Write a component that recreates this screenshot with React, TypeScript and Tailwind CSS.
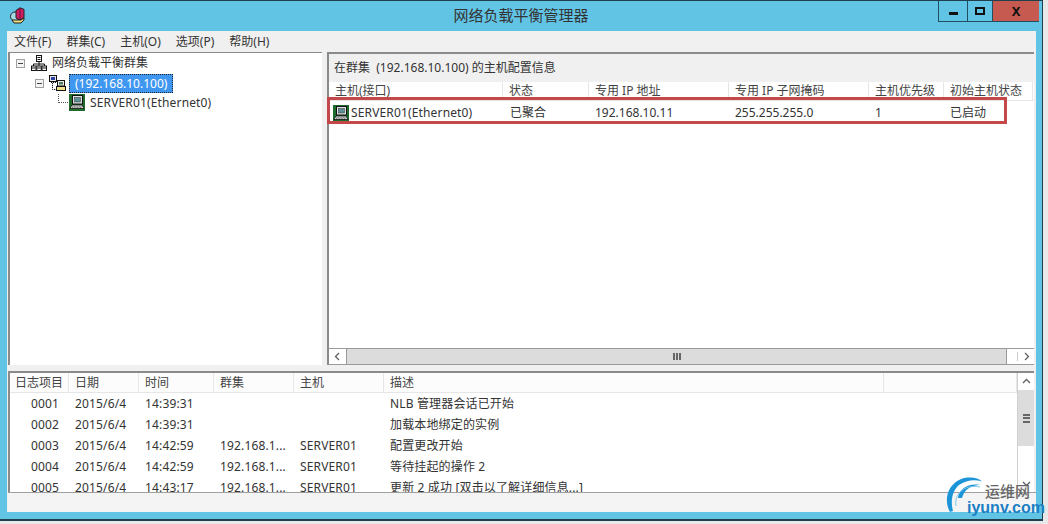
import React from "react";

const font = { fontFamily: '"Noto Sans","Noto Sans CJK SC",sans-serif' };

function ServerIcon() {
  return (
    <svg width="16" height="17" viewBox="0 0 16 17" className="shrink-0">
      <rect x="0" y="0" width="16" height="17" fill="#1f6b2c" />
      <rect x="3.5" y="1.5" width="10" height="8.5" fill="#e0e3e4" stroke="#111" />
      <rect x="5.5" y="3.5" width="6" height="4.5" fill="#5d8f94" stroke="#333" strokeWidth="0.5" />
      <path d="M3 11h10l2 3.5H1z" fill="#e6e6e6" stroke="#111" strokeWidth="0.8" />
      <path d="M3.5 12.4h9M3 13.6h10" stroke="#444" strokeWidth="0.7" strokeDasharray="1 0.6" />
    </svg>
  );
}

function NetIcon() {
  return (
    <svg width="16" height="16" viewBox="0 0 16 16" className="shrink-0">
      <rect x="5.5" y="0.5" width="5" height="6" fill="#fff" stroke="#111" />
      <path d="M6.5 2.5h3M6.5 4.5h3" stroke="#111" />
      <path d="M8 7v2M2.5 11V9h11v2M8 9v2" stroke="#111" fill="none" />
      <rect x="0.5" y="11" width="4.5" height="4.5" fill="#fff" stroke="#111" />
      <rect x="5.8" y="11" width="4.5" height="4.5" fill="#fff" stroke="#111" />
      <rect x="11" y="11" width="4.5" height="4.5" fill="#fff" stroke="#111" />
      <path d="M1 13h3.5M6.3 13h3.5M11.5 13H15" stroke="#111" />
    </svg>
  );
}

function ClusterIcon() {
  return (
    <svg width="17" height="17" viewBox="0 0 17 17" className="shrink-0">
      <rect x="0.5" y="0.5" width="7" height="6" fill="#e8e8e8" stroke="#111" />
      <rect x="2" y="2" width="4" height="3" fill="#2a3f9e" />
      <path d="M2 7.5h5M3.5 8v6.5H7" stroke="#111" fill="none" strokeDasharray="1.2 0.8" />
      <rect x="8.5" y="5.5" width="7" height="5.5" fill="#e8e8e8" stroke="#111" />
      <rect x="10" y="7" width="4" height="2.5" fill="#4d7f5c" />
      <rect x="7.5" y="11.5" width="9" height="4" fill="#eee08a" stroke="#111" />
    </svg>
  );
}

function AppIcon() {
  return (
    <svg width="17" height="17" viewBox="0 0 17 17">
      <circle cx="5" cy="9.5" r="4.5" fill="#a5dce8" stroke="#222" />
      <path d="M6 3.5 10 0.8l4 1.6v8.4L10 13 6 11z" fill="#cc1f63" stroke="#222" />
      <path d="M10 1v12" stroke="#6b1038" />
      <path d="M2 13h9l3-2v2l-3 3H4z" fill="#f2dd7c" stroke="#222" />
    </svg>
  );
}

const Expander = () => (
  <span className="flex h-[9px] w-[9px] shrink-0 items-center justify-center border border-[#a0a0a0] bg-[#f4f4f4]">
    <span className="h-px w-[5px] bg-[#444]" />
  </span>
);

const hostCols: [string, number][] = [
  ["主机(接口)", 174],
  ["状态", 86],
  ["专用 IP 地址", 140],
  ["专用 IP 子网掩码", 140],
  ["主机优先级", 75],
  ["初始主机状态", 89],
];

const logCols: [string, number][] = [
  ["日志项目", 59],
  ["日期", 70],
  ["时间", 75],
  ["群集", 80],
  ["主机", 90],
  ["描述", 500],
  ["", 133],
];

const logRows = [
  ["0001", "2015/6/4", "14:39:31", "", "", "NLB 管理器会话已开始"],
  ["0002", "2015/6/4", "14:39:31", "", "", "加载本地绑定的实例"],
  ["0003", "2015/6/4", "14:42:59", "192.168.1...", "SERVER01", "配置更改开始"],
  ["0004", "2015/6/4", "14:42:59", "192.168.1...", "SERVER01", "等待挂起的操作 2"],
  ["0005", "2015/6/4", "14:43:17", "192.168.1...", "SERVER01", "更新 2 成功 [双击以了解详细信息...]"],
];

const Chevron = ({ d }: { d: string }) => (
  <svg width="9" height="9" viewBox="0 0 9 9">
    <path d={d} fill="none" stroke="#606060" strokeWidth="1.3" />
  </svg>
);

export default function App() {
  return (
    <div className="relative h-[524px] w-[1048px] overflow-hidden bg-[#e8e8e8] text-[12px] text-[#333]" style={font}>
      <div className="flex h-[521px] w-[1043px] flex-col border-b-2 border-r border-t border-[#1f3f4d] bg-[#62c4e5]">
        {/* Title bar */}
        <div className="grid h-[30px] shrink-0 grid-cols-[1fr_auto_1fr] items-start">
          <div className="pl-[10px] pt-[6px]">
            <AppIcon />
          </div>
          <div className="pt-[4px] text-[15px] leading-[20px] text-[#333]">网络负载平衡管理器</div>
          <div className="flex justify-end pr-[3px]">
            <div className="flex h-[21px] w-[29px] items-center justify-center border-b border-l border-[#1f4f60]">
              <span className="mt-[4px] h-[3px] w-[9px] bg-[#111]" />
            </div>
            <div className="flex h-[21px] w-[25px] items-center justify-center border-b border-l border-[#1f4f60]">
              <span className="h-[8px] w-[10px] border-2 border-[#111]" />
            </div>
            <div className="flex h-[21px] w-[47px] items-center justify-center border-b border-l border-[#1f4f60] bg-[#c75a50] text-[13px] font-bold leading-none text-[#111]">
              X
            </div>
          </div>
        </div>

        {/* Client */}
        <div className="ml-[7px] mr-[6px] flex h-[481px] flex-col bg-[#f0f0f0]">
          <div className="flex h-[21px] shrink-0 items-center gap-[15px] pl-[7px] leading-[20px]">
            <span>文件(F)</span>
            <span>群集(C)</span>
            <span>主机(O)</span>
            <span>选项(P)</span>
            <span>帮助(H)</span>
          </div>

          <div className="flex h-[313px] shrink-0">
            {/* Tree */}
            <div className="ml-px h-full w-[314px] border-t border-l-2 border-[#8a8a8a] bg-white pl-[6px]">
              <div className="flex h-[20px] items-center">
                <Expander />
                <span className="ml-[6px]"><NetIcon /></span>
                <span className="ml-[5px]">网络负载平衡群集</span>
              </div>
              <div className="flex h-[21px] items-center pl-[19px]">
                <Expander />
                <span className="ml-[5px]"><ClusterIcon /></span>
                <span className="ml-[3px] border border-dotted border-[#223] bg-[#3f97f0] px-[5px] leading-[17px] text-white">(192.168.10.100)</span>
              </div>
              <div className="flex h-[17px] items-center pl-[42px]">
                <span className="relative mr-px h-px w-[10px] border-t border-dotted border-[#555]">
                  <span className="absolute bottom-0 left-0 h-[9px] w-px border-l border-dotted border-[#555]" />
                </span>
                <ServerIcon />
                <span className="ml-[5px] tracking-[0.15px]">SERVER01(Ethernet0)</span>
              </div>
            </div>

            {/* Right pane */}
            <div className="ml-[5px] mr-[2px] flex h-full min-w-0 flex-1 flex-col border-t-2 border-l-2 border-[#8a8a8a] bg-white">
              <div className="flex h-[28px] shrink-0 items-center whitespace-pre bg-[#f0f0f0] pb-px pl-[5px]">在群集  (192.168.10.100) 的主机配置信息</div>
              <div className="flex h-[19px] shrink-0 border-b border-[#e6e6e6]">
                {hostCols.map(([t, w]) => (
                  <div key={t} className="shrink-0 overflow-hidden border-r border-[#e6e6e6] pl-[6px] leading-[18px] text-[#444]" style={{ width: w }}>
                    {t}
                  </div>
                ))}
              </div>
              <div className="flex h-[24px] shrink-0 items-center">
                <div className="flex w-[175px] shrink-0 items-center pl-[4px]">
                  <ServerIcon />
                  <span className="ml-[2px] tracking-[0.15px]">SERVER01(Ethernet0)</span>
                </div>
                <div className="w-[85px] shrink-0 pl-[6px]">已聚合</div>
                <div className="w-[140px] shrink-0 pl-[6px]">192.168.10.11</div>
                <div className="w-[140px] shrink-0 pl-[6px]">255.255.255.0</div>
                <div className="w-[75px] shrink-0 pl-[6px]">1</div>
                <div className="w-[85px] shrink-0 pl-[6px]">已启动</div>
              </div>
              <div className="flex-1" />
              <div className="flex h-[17px] shrink-0 items-center border-y border-[#9a9a9a] bg-white">
                <div className="flex w-[17px] shrink-0 items-center justify-center"><Chevron d="M6 1 2.5 4.5 6 8" /></div>
                <div className="flex h-full w-[661px] shrink-0 items-center justify-center border-x border-[#9a9a9a] bg-[#dcdcdc]">
                  <span className="h-[7px] w-[8px] border-x-2 border-[#666] px-px"><span className="block h-full w-[2px] bg-[#666]" /></span>
                </div>
                <div className="flex-1" />
                <div className="flex w-[17px] shrink-0 items-center justify-center border-l border-[#ccc]"><Chevron d="M3 1 6.5 4.5 3 8" /></div>
              </div>
            </div>
          </div>

          {/* Log */}
          <div className="ml-px mr-[2px] mt-[6px] flex h-[121px] shrink-0 border-t-2 border-l-2 border-[#8a8a8a] bg-white">
            <div className="min-w-0 flex-1 overflow-hidden">
              <div className="flex h-[20px] border-b border-[#e6e6e6] bg-[#fcfcfc]">
                {logCols.map(([t, w], i) => (
                  <div key={i} className="shrink-0 border-r border-[#e6e6e6] pl-[6px] leading-[19px] text-[#444] first:pl-[5px]" style={{ width: w }}>
                    {t}
                  </div>
                ))}
              </div>
              <div className="h-[99px] overflow-hidden tracking-[0.15px]">
                {logRows.map((r) => (
                  <div key={r[0]} className="flex h-[21px] items-center">
                    <div className="w-[59px] shrink-0 pl-[21px]">{r[0]}</div>
                    <div className="w-[70px] shrink-0 pl-[6px]">{r[1]}</div>
                    <div className="w-[75px] shrink-0 pl-[6px]">{r[2]}</div>
                    <div className="w-[80px] shrink-0 pl-[6px]">{r[3]}</div>
                    <div className="w-[90px] shrink-0 pl-[6px]">{r[4]}</div>
                    <div className="pl-[6px]">{r[5]}</div>
                  </div>
                ))}
              </div>
            </div>
            <div className="flex w-[17px] shrink-0 flex-col border-l border-[#d0d0d0]">
              <div className="flex h-[17px] items-center justify-center"><Chevron d="M1 6 4.5 2.5 8 6" /></div>
              <div className="flex h-[56px] flex-col items-center justify-center gap-[1.5px] bg-[#dcdcdc]">
                <span className="h-[2px] w-[7px] bg-[#666]" />
                <span className="h-[2px] w-[7px] bg-[#666]" />
                <span className="h-[2px] w-[7px] bg-[#666]" />
              </div>
              <div className="flex-1" />
              <div className="flex h-[17px] items-center justify-center"><Chevron d="M1 3 4.5 6.5 8 3" /></div>
            </div>
          </div>

          {/* Status */}
          <div className="ml-px flex-1 border-t border-[#a0a0a0] bg-[#f4f4f4]" />
        </div>
      </div>

      {/* Red annotation */}
      <div className="absolute left-[327px] top-[97px] h-[27px] w-[680px] border-[3px] border-[#c4474a]" />

      {/* Watermark */}
      <div className="absolute left-[944px] top-[476px] h-[46px] w-[104px]">
        <svg width="44" height="38" viewBox="0 0 44 38" className="absolute left-0 top-0">
          <path d="M6 36C-2 22 6 3 24 1.5c6-.5 11 1 14 4C31 3 22 4 15 9 9 14 6 24 9 35Z" fill="#1b95d8" />
          <path d="M14 22C15 13 24 7 36 9c-9 0-16 5-18 13Z" fill="#1b95d8" />
          <path d="M12 30c-2-12 8-22 24-19" fill="none" stroke="#7cc6ea" strokeWidth="1" />
        </svg>
        <span className="absolute left-[41px] top-[5px] whitespace-nowrap text-[15px] font-medium leading-[20px] text-[#666]">运维网</span>
        <span className="absolute left-[23px] top-[23px] whitespace-nowrap text-[16px] font-bold leading-[18px] text-[#1b7fc4]" style={{ fontFamily: '"Liberation Sans",sans-serif' }}>iyunv.com</span>
      </div>
    </div>
  );
}
